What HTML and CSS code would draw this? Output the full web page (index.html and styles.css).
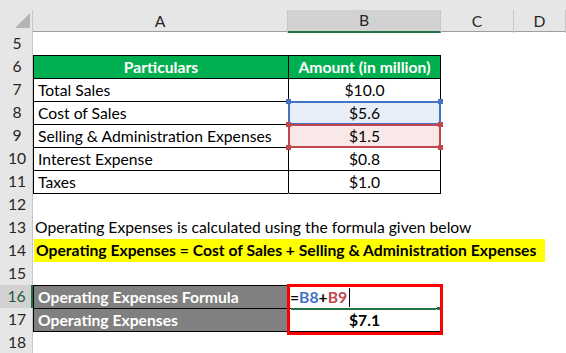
FILE: index.html
```html
<!DOCTYPE html>
<html>
<head>
<meta charset="utf-8">
<link rel="stylesheet" href="styles.css">
</head>
<body>
<div class="sheet">
  <div class="topstrip"></div>
  <div class="row head">
    <div class="rh corner"><span class="tri"></span></div>
    <div class="ch">A</div>
    <div class="ch sel">B</div>
    <div class="ch">C</div>
    <div class="ch">D</div>
  </div>
  <div class="row"><div class="rh">5</div><div class="c"></div><div class="c"></div><div class="c"></div><div class="c"></div></div>
  <div class="row t"><div class="rh">6</div><div class="c a th">Particulars</div><div class="c b th">Amount (in million)</div><div class="c"></div><div class="c"></div></div>
  <div class="row t"><div class="rh">7</div><div class="c a">Total Sales</div><div class="c b">$10.0</div><div class="c"></div><div class="c"></div></div>
  <div class="row t"><div class="rh">8</div><div class="c a">Cost of Sales</div><div class="c b ref blue">$5.6<span class="hd tl"></span><span class="hd tr"></span></div><div class="c"></div><div class="c"></div></div>
  <div class="row t"><div class="rh">9</div><div class="c a">Selling &amp; Administration Expenses</div><div class="c b ref red">$1.5<span class="hd tl"></span><span class="hd tr"></span><span class="hd bl"></span><span class="hd br"></span></div><div class="c"></div><div class="c"></div></div>
  <div class="row t"><div class="rh">10</div><div class="c a">Interest Expense</div><div class="c b">$0.8</div><div class="c"></div><div class="c"></div></div>
  <div class="row t"><div class="rh">11</div><div class="c a">Taxes</div><div class="c b">$1.0</div><div class="c"></div><div class="c"></div></div>
  <div class="row t end"><div class="rh">12</div><div class="c a"></div><div class="c b"></div><div class="c"></div><div class="c"></div></div>
  <div class="row"><div class="rh">13</div><div class="c wide">Operating Expenses is calculated using the formula given below</div></div>
  <div class="row"><div class="rh">14</div><div class="c wide"><span class="hl">Operating Expenses = Cost of Sales + Selling &amp; Administration Expenses</span></div></div>
  <div class="row"><div class="rh">15</div><div class="c"></div><div class="c"></div><div class="c"></div><div class="c"></div></div>
  <div class="row t"><div class="rh sel">16</div><div class="c a gray">Operating Expenses Formula</div><div class="c b fx"><span class="k">=</span><span class="r1">B8</span><span class="k">+</span><span class="r2">B9</span><span class="caret"></span><span class="box"></span><span class="act"></span><span class="fill"></span></div><div class="c"></div><div class="c"></div></div>
  <div class="row t"><div class="rh">17</div><div class="c a gray">Operating Expenses</div><div class="c b bold">$7.1</div><div class="c"></div><div class="c"></div></div>
  <div class="row t end"><div class="rh">18</div><div class="c a"></div><div class="c b"></div><div class="c"></div><div class="c"></div></div>
</div>
</body>
</html>
```
FILE: styles.css
```css
* { box-sizing: border-box; }
html, body { margin: 0; padding: 0; background: #fff; }
body {
  width: 566px; height: 353px; overflow: hidden;
  font-family: "Lato", "Open Sans", sans-serif;
  font-size: 15.7px; color: #000;
}
.sheet { width: 566px; }
.topstrip { height: 10px; background: #e6e6e6; }
.row {
  display: grid;
  grid-template-columns: 33px 255px 153px 73px 1fr;
  height: 23px;
}
.head { height: 22px; background: #e6e6e6; border-bottom: 1px solid #9e9e9e; }
.rh {
  background: #e6e6e6; border-right: 1px solid #c6c6c6;
  color: #262626; text-align: center; line-height: 23px;
  padding-left: 2px;
}
.rh.sel { background: #d2d2d2; border-right: 2px solid #217346; color: #1f5c3a; }
.corner { position: relative; border-right: 1px solid #c6c6c6; }
.tri {
  position: absolute; left: 15px; top: 3px;
  width: 0; height: 0;
  border-left: 15px solid transparent; border-bottom: 15px solid #b4b4b4;
}
.ch {
  text-align: center; line-height: 22px; color: #262626;
  border-right: 1px solid #c6c6c6;
}
.ch.sel { background: #d2d2d2; border-bottom: 2px solid #217346; line-height: 21px; }
.c { line-height: 22px; white-space: nowrap; padding: 0 4px; }
.row.t .a { border-top: 1px solid #000; border-left: 1px solid #000; }
.row.t .b { border-top: 1px solid #000; border-left: 1px solid #000; border-right: 1px solid #000; text-align: center; }
.row.end .a, .row.end .b { border-left: 0; border-right: 0; }
.row.end .b { border-left: 1px solid transparent; }
.th { background: #00b050; color: #fff; font-weight: 700; text-align: center; }
.wide { grid-column: 2 / 6; padding-left: 2px; }
.hl { display: inline-block; background: #ffff00; font-weight: 700; padding: 0 9px 0 2px; margin-left: -1px; line-height: 23px; }
.gray { background: #808080; color: #fff; font-weight: 700; }
.bold { font-weight: 700; }
.ref { position: relative; }
.ref::before {
  content: ""; position: absolute; left: -1px; right: -1px; top: -1px; bottom: -1px;
  border: 2px solid;
}
.blue { background: #e8eef8; }
.blue::before { border-color: #4472c4; }
.red { background: #f9e8e8; z-index: 1; }
.red::before { border-color: #c0474d; }
.hd { position: absolute; width: 5px; height: 5px; }
.blue .hd { background: #4472c4; }
.red .hd { background: #c0474d; }
.hd.tl { left: -3px; top: -3px; }
.hd.tr { right: -3px; top: -3px; }
.hd.bl { left: -3px; bottom: -3px; }
.hd.br { right: -3px; bottom: -3px; }
.fx { position: relative; text-align: left !important; font-weight: 700; padding-left: 1px; }
.k { color: #000; }
.r1 { color: #4472c4; }
.r2 { color: #c0474d; }
.caret { display: inline-block; width: 1px; height: 19px; background: #000; vertical-align: -4px; margin-left: 2px; }
.box { position: absolute; left: -2px; top: -2px; width: 156px; height: 51px; border: 3px solid #ff0000; z-index: 2; }
.act { position: absolute; left: 2px; right: 4px; bottom: -2px; height: 2px; background: #217346; z-index: 3; }
.fill { position: absolute; right: 0; bottom: -2px; width: 3px; height: 3px; background: #217346; z-index: 3; }
```
